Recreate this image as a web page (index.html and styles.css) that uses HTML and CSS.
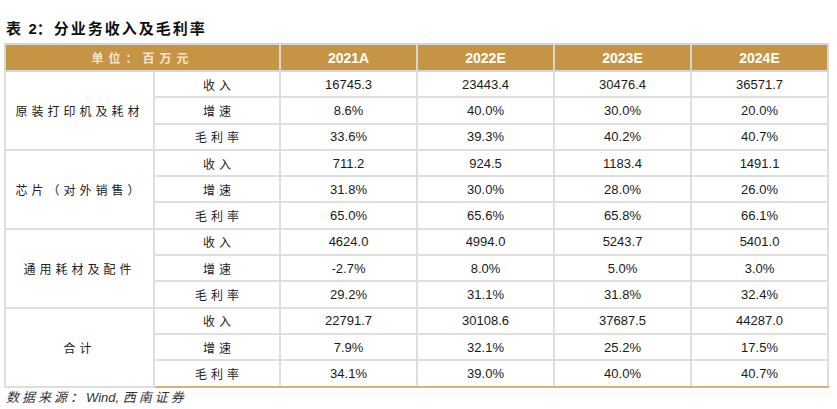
FILE: index.html
```html
<!DOCTYPE html>
<html lang="zh">
<head>
<meta charset="utf-8">
<link rel="stylesheet" href="styles.css">
</head>
<body>
<div class="page">
  <h1 class="title">表 <span class="num">2</span>：分业务收入及毛利率</h1>
  <table class="data">
    <colgroup>
      <col class="c-seg"><col class="c-item"><col class="c-yr"><col class="c-yr"><col class="c-yr"><col class="c-yr">
    </colgroup>
    <thead>
      <tr>
        <th colspan="2" class="unit">单位：百万元</th>
        <th>2021A</th><th>2022E</th><th>2023E</th><th>2024E</th>
      </tr>
    </thead>
    <tbody>
      <tr><td rowspan="3" class="seg">原装打印机及耗材</td><td class="item">收入</td><td>16745.3</td><td>23443.4</td><td>30476.4</td><td>36571.7</td></tr>
      <tr><td class="item">增速</td><td>8.6%</td><td>40.0%</td><td>30.0%</td><td>20.0%</td></tr>
      <tr><td class="item">毛利率</td><td>33.6%</td><td>39.3%</td><td>40.2%</td><td>40.7%</td></tr>
      <tr><td rowspan="3" class="seg">芯片（对外销售）</td><td class="item">收入</td><td>711.2</td><td>924.5</td><td>1183.4</td><td>1491.1</td></tr>
      <tr><td class="item">增速</td><td>31.8%</td><td>30.0%</td><td>28.0%</td><td>26.0%</td></tr>
      <tr><td class="item">毛利率</td><td>65.0%</td><td>65.6%</td><td>65.8%</td><td>66.1%</td></tr>
      <tr><td rowspan="3" class="seg">通用耗材及配件</td><td class="item">收入</td><td>4624.0</td><td>4994.0</td><td>5243.7</td><td>5401.0</td></tr>
      <tr><td class="item">增速</td><td>-2.7%</td><td>8.0%</td><td>5.0%</td><td>3.0%</td></tr>
      <tr><td class="item">毛利率</td><td>29.2%</td><td>31.1%</td><td>31.8%</td><td>32.4%</td></tr>
      <tr><td rowspan="3" class="seg">合计</td><td class="item">收入</td><td>22791.7</td><td>30108.6</td><td>37687.5</td><td>44287.0</td></tr>
      <tr><td class="item">增速</td><td>7.9%</td><td>32.1%</td><td>25.2%</td><td>17.5%</td></tr>
      <tr class="last"><td class="item">毛利率</td><td>34.1%</td><td>39.0%</td><td>40.0%</td><td>40.7%</td></tr>
    </tbody>
  </table>
  <p class="source"><span class="cjk">数据来源：</span>Wind, <span class="cjk">西南证券</span></p>
</div>
</body>
</html>
```
FILE: styles.css
```css
html, body {
  margin: 0;
  padding: 0;
  background: #ffffff;
}
.page {
  padding: 19px 0 0 4px;
  width: 825px;
  font-family: "Liberation Sans", "Noto Sans CJK SC", sans-serif;
  color: #1a1a1a;
}
.title {
  margin: 0 0 5px 2px;
  font-family: "Noto Sans CJK SC", sans-serif;
  font-size: 15px;
  font-weight: 700;
  line-height: 18px;
  letter-spacing: 2px;
  color: #111;
}
.title .num {
  font-family: "Liberation Sans", sans-serif;
  letter-spacing: 0;
}
.data {
  width: 825px;
  border-collapse: collapse;
  table-layout: fixed;
  border: 2px solid #d6d6d6;
  border-bottom: 2px solid #d8b07a;
}
.c-seg { width: 149px; }
.c-item { width: 126px; }
.c-yr { width: 137px; }
.data thead tr { height: 27px; }
.data tbody tr { height: 26.3px; }
.data th {
  background: #c69445;
  color: #ffffff;
  font-family: "Liberation Sans", sans-serif;
  font-weight: 700;
  font-size: 14px;
  padding: 0;
  border: 2px solid #d6d6d6;
  text-align: center;
}
.data th.unit {
  font-family: "Noto Sans CJK SC", sans-serif;
  font-size: 12px;
  letter-spacing: 5px;
  color: #f3e6cf;
}
.data td {
  padding: 0;
  text-align: center;
  font-size: 13px;
  border: 2px solid #dedede;
  color: #1a1a1a;
}
.data td.seg,
.data td.item {
  font-family: "Noto Sans CJK SC", sans-serif;
  font-size: 12px;
  letter-spacing: 4px;
  color: #222;
}
.data td.item {
  padding-left: 4px;
}
.data tr.last td {
  border-bottom: 2px solid #d8b07a;
}
.source {
  margin: 0 0 0 2px;
  font-family: "Liberation Sans", "Noto Sans CJK SC", sans-serif;
  font-style: italic;
  font-size: 13px;
  line-height: 18px;
  color: #333;
}
.source .cjk {
  font-family: "Noto Sans CJK SC", sans-serif;
  letter-spacing: 3px;
}
```
